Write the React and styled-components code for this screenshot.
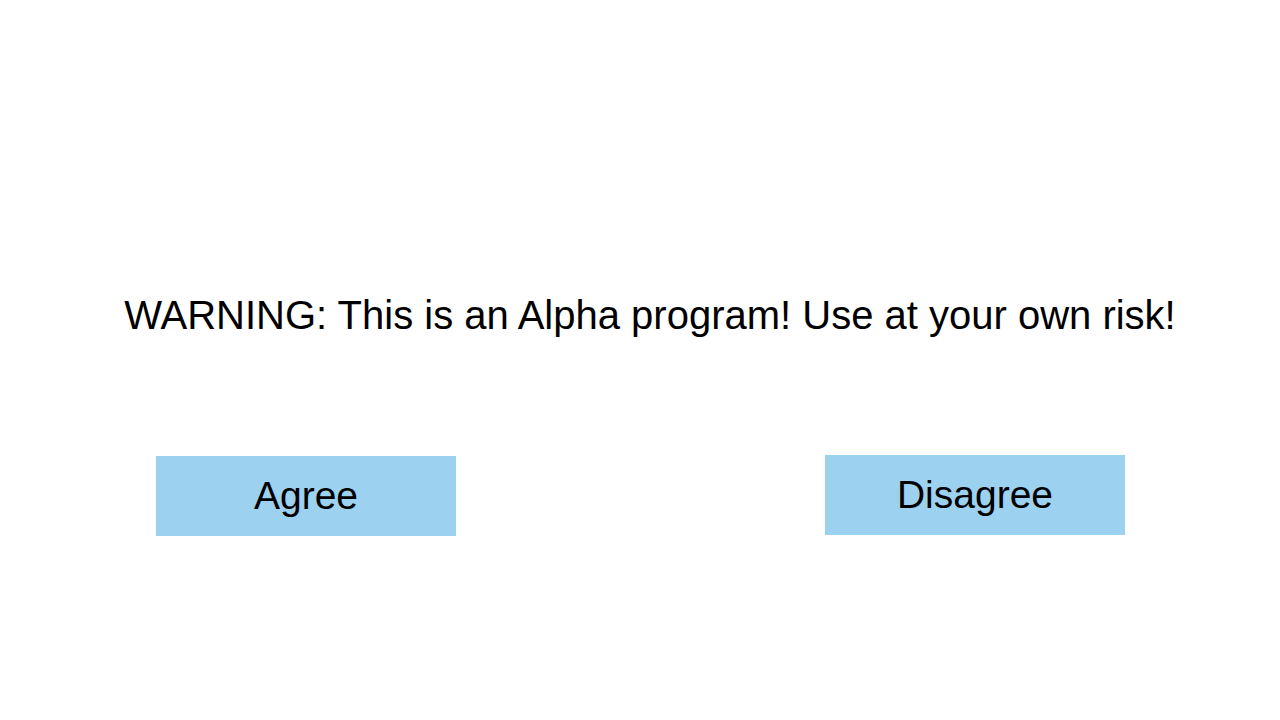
import React from "react";
import styled, { createGlobalStyle } from "styled-components";

const Global = createGlobalStyle`
  html, body { margin: 0; padding: 0; background: #ffffff; }
  body { font-family: "Liberation Sans", Arial, Helvetica, sans-serif; color: #000; }
`;

const Page = styled.main`
  width: 1280px;
  height: 720px;
  display: flex;
  flex-direction: column;
  box-sizing: border-box;
  padding-top: 291px;
`;

const Message = styled.p`
  margin: 0;
  padding-left: 20px;
  text-align: center;
  font-size: 40px;
  line-height: 48px;
  font-weight: 400;
`;

const ButtonRow = styled.div`
  display: flex;
  justify-content: space-between;
  align-items: flex-start;
  padding: 0 155px 0 156px;
  margin-top: 116px;
`;

const Choice = styled.button`
  width: 300px;
  height: 80px;
  margin-top: ${(p) => p.$offset || 0}px;
  border: none;
  border-radius: 0;
  background: #9dd1f0;
  color: #000;
  font-family: "Liberation Sans", Arial, Helvetica, sans-serif;
  font-size: 39px;
  padding: 0;
  cursor: pointer;
  display: flex;
  align-items: center;
  justify-content: center;
`;

export default function App() {
  return (
    <>
      <Global />
      <Page>
        <Message>WARNING: This is an Alpha program! Use at your own risk!</Message>
        <ButtonRow>
          <Choice $offset={1}>Agree</Choice>
          <Choice>Disagree</Choice>
        </ButtonRow>
      </Page>
    </>
  );
}
